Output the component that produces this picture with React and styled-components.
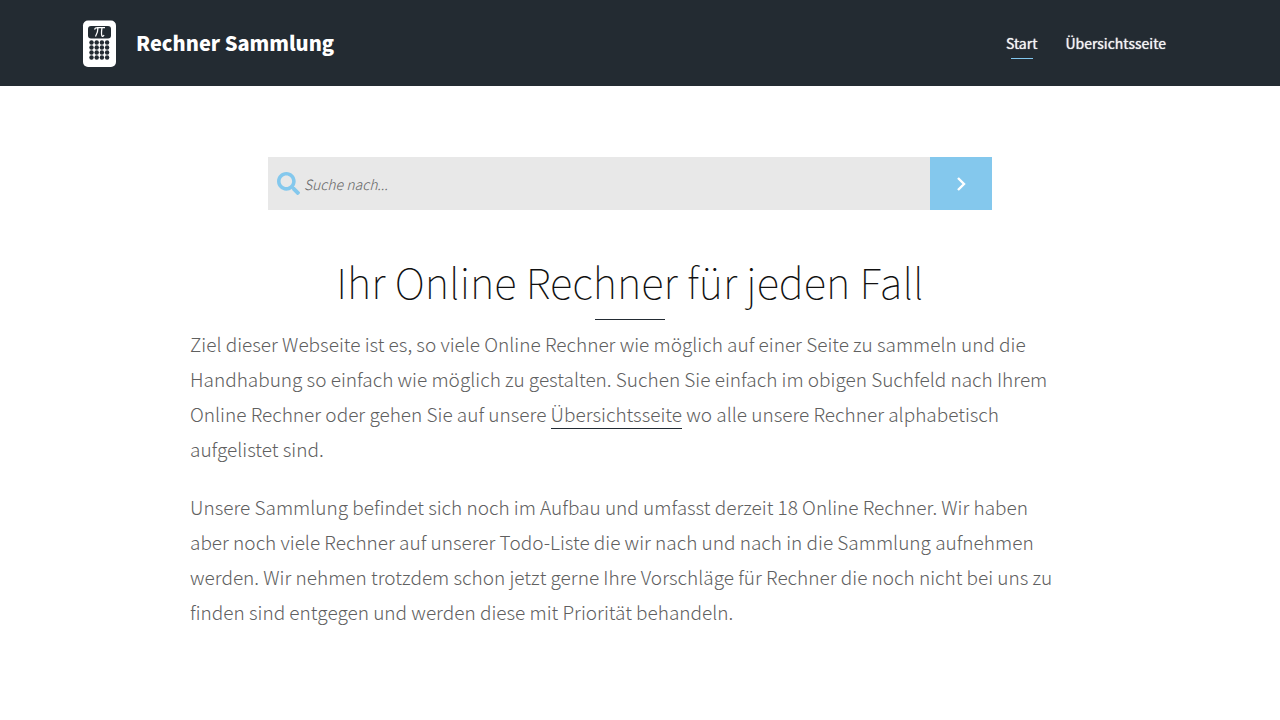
import React from "react";
import styled, { createGlobalStyle } from "styled-components";

const GlobalStyle = createGlobalStyle`
  * {
    box-sizing: border-box;
  }

  body {
    margin: 0;
    background: #fff;
    color: #232b33;
    font-family: "Noto Sans CJK JP", "Open Sans", sans-serif;
  }
`;

const Header = styled.header`
  display: flex;
  align-items: center;
  justify-content: space-between;
  height: 86px;
  padding: 0 114px 0 82px;
  background: #232b32;
`;

const Brand = styled.a`
  display: flex;
  align-items: center;
  gap: 19px;
  color: #fff;
  font-size: 20px;
  font-weight: 900;
  line-height: 32px;
  text-decoration: none;
`;

const Nav = styled.nav`
  display: flex;
  gap: 28px;
`;

const NavLink = styled.a`
  display: flex;
  flex-direction: column;
  align-items: center;
  color: #f4f4f4;
  font-size: 14px;
  font-weight: 400;
  line-height: 30px;
  text-decoration: none;
  text-shadow: 0 0 1px #f4f4f4;

  &::after {
    content: "";
    width: 22px;
    height: 1px;
    background: ${(props) => (props.$active ? "#82c8f0" : "transparent")};
  }
`;

const Main = styled.main`
  display: flex;
  flex-direction: column;
  align-items: center;
  padding: 71px 210px 80px 190px;
`;

const Search = styled.form`
  display: flex;
  width: 100%;
  max-width: 724px;
  height: 53px;
`;

const SearchField = styled.label`
  display: flex;
  flex: 1;
  align-items: center;
  gap: 4px;
  padding-left: 9px;
  background: #e8e8e8;
`;

const SearchInput = styled.input`
  flex: 1;
  min-width: 0;
  height: 100%;
  padding: 0;
  border: 0;
  outline: 0;
  background: none;
  color: #555;
  font-family: inherit;
  font-size: 14px;
  font-style: italic;
  font-weight: 300;

  &::placeholder {
    color: #666;
    opacity: 1;
  }
`;

const SearchButton = styled.button`
  display: flex;
  align-items: center;
  justify-content: center;
  width: 62px;
  border: 0;
  padding: 0;
  background: #84c8ed;
  color: #fff;
  cursor: pointer;
`;

const Title = styled.h1`
  display: flex;
  flex-direction: column;
  align-items: center;
  margin: 39px 0 6px;
  font-size: 42px;
  font-weight: 100;
  line-height: 64px;
  color: #111;

  &::after {
    content: "";
    width: 70px;
    height: 1px;
    margin-top: 6px;
    background: #232b33;
  }
`;

const Text = styled.p`
  width: 100%;
  margin: 0 0 23px;
  color: #606060;
  font-size: 19px;
  font-weight: 300;
  line-height: 35px;
`;

const TextLink = styled.a`
  padding-bottom: 1px;
  border-bottom: 1px solid #232b33;
  color: inherit;
  text-decoration: none;
`;

const DOT_COLUMNS = [9.5, 14.7, 19.9, 25.1];
const DOT_ROWS = [23.5, 28.5, 33.5, 38.5];

const Logo = () => (
  <svg width="35" height="48" viewBox="0 0 35 48" aria-hidden="true">
    <rect x="1" y="1.500" width="33" height="46.500" rx="5" fill="#fff" />
    <rect x="6" y="7" width="23" height="12.500" rx="3" fill="#232b32" />
    <path
      d="M12.500 10.500Q13 8.600 15.500 8.600H23M16 8.600Q16 13.500 13.500 17.500M20 8.600Q19 15.500 20 17Q21 18 22 16"
      fill="none"
      stroke="#fff"
      strokeWidth="1.300"
    />
    {DOT_ROWS.map((y) =>
      DOT_COLUMNS.map((x) => (
        <circle key={`${x}-${y}`} cx={x} cy={y} r="2.200" fill="#232b32" />
      ))
    )}
  </svg>
);

const SearchIcon = () => (
  <svg width="23" height="23" viewBox="0 0 512 512" fill="#84c8ed" aria-hidden="true">
    <path d="M505 442.700L405.300 343c-4.500-4.500-10.600-7-17-7H372c27.600-35.300 44-79.700 44-128C416 93.100 322.900 0 208 0S0 93.100 0 208s93.100 208 208 208c48.300 0 92.700-16.400 128-44v16.300c0 6.400 2.500 12.500 7 17l99.700 99.700c9.400 9.400 24.600 9.400 33.900 0l28.300-28.300c9.400-9.400 9.400-24.600.1-34zM208 336c-70.700 0-128-57.200-128-128 0-70.700 57.200-128 128-128 70.700 0 128 57.200 128 128 0 70.700-57.200 128-128 128z" />
  </svg>
);

const ArrowIcon = () => (
  <svg width="10" height="14" viewBox="0 0 10 14" aria-hidden="true">
    <path d="M2 1L8 7L2 13" fill="none" stroke="#fff" strokeWidth="2.400" />
  </svg>
);

const App = () => {
  return (
    <>
      <GlobalStyle />
      <Header>
        <Brand href="#start">
          <Logo />
          Rechner Sammlung
        </Brand>
        <Nav>
          <NavLink href="#start" $active>
            Start
          </NavLink>
          <NavLink href="#uebersicht">Übersichtsseite</NavLink>
        </Nav>
      </Header>
      <Main>
        <Search role="search" onSubmit={(e) => e.preventDefault()}>
          <SearchField htmlFor="search">
            <SearchIcon />
            <SearchInput
              id="search"
              type="text"
              aria-label="Suche"
              placeholder="Suche nach..."
            />
          </SearchField>
          <SearchButton type="submit" aria-label="Suchen">
            <ArrowIcon />
          </SearchButton>
        </Search>
        <Title>Ihr Online Rechner für jeden Fall</Title>
        <Text>
          Ziel dieser Webseite ist es, so viele Online Rechner wie möglich auf
          einer Seite zu sammeln und die Handhabung so einfach wie möglich zu
          gestalten. Suchen Sie einfach im obigen Suchfeld nach Ihrem Online
          Rechner oder gehen Sie auf unsere{" "}
          <TextLink href="#uebersicht">Übersichtsseite</TextLink> wo alle
          unsere Rechner alphabetisch aufgelistet sind.
        </Text>
        <Text>
          Unsere Sammlung befindet sich noch im Aufbau und umfasst derzeit 18
          Online Rechner. Wir haben aber noch viele Rechner auf unserer
          Todo-Liste die wir nach und nach in die Sammlung aufnehmen werden.
          Wir nehmen trotzdem schon jetzt gerne Ihre Vorschläge für Rechner die
          noch nicht bei uns zu finden sind entgegen und werden diese mit
          Priorität behandeln.
        </Text>
      </Main>
    </>
  );
};

export default App;
